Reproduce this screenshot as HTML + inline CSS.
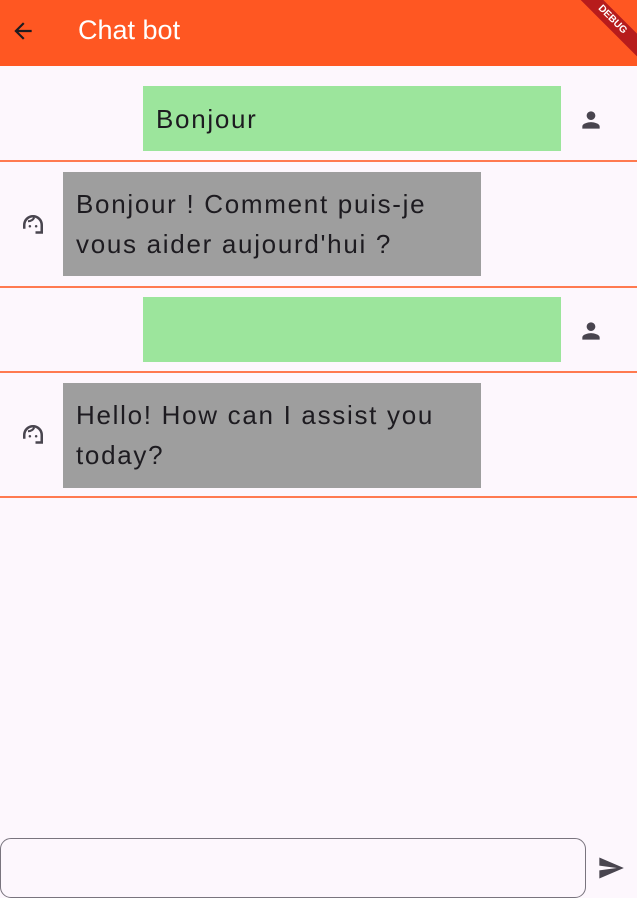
<!DOCTYPE html>
<html><head><meta charset="utf-8"><style>
*{margin:0;padding:0;box-sizing:border-box}
body{width:637px;height:898px;background:#fdf7fd;position:relative;overflow:hidden;font-family:"Liberation Sans",sans-serif;color:#1d1b20}
.bar{position:absolute;left:0;top:0;width:637px;height:66px;background:#ff5722}
.title{position:absolute;left:78px;top:15px;font-size:27px;color:#fff}
.abs{position:absolute}
.g{background:#9ce59c}.r{background:#9e9e9e}
.t{font-size:26px;line-height:40px;padding-left:13px;letter-spacing:1.7px;white-space:nowrap}
.hr{position:absolute;left:0;width:637px;height:2px;background:#ff7a50}
.ribbon{position:absolute;right:-30px;top:12px;width:110px;height:16px;background:#b71c1c;color:#fff;font-size:10px;font-weight:bold;text-align:center;line-height:16px;transform:rotate(45deg)}
</style></head><body>
<div class="bar"></div>
<svg class="abs" style="left:10px;top:18px" width="26" height="26" viewBox="0 0 24 24"><path d="M20 11H7.830l5.59-5.59L12 4l-8 8 8 8 1.41-1.41L7.83 13H20v-2z" fill="#1d1b20"/></svg>
<div class="title">Chat bot</div>
<div class="ribbon">DEBUG</div>

<div class="abs g t" style="left:143px;top:86px;width:418px;height:65px;padding-top:13px">Bonjour</div>
<svg class="abs" style="left:578px;top:107px" width="26" height="26" viewBox="0 0 24 24"><path d="M12 12c2.2 0 4-1.8 4-4s-1.8-4-4-4-4 1.8-4 4 1.8 4 4 4zm0 2c-2.7 0-8 1.3-8 4v2h16v-2c0-2.7-5.3-4-8-4z" fill="#49454f"/></svg>
<div class="hr" style="top:160px"></div>

<div class="abs r t" style="left:63px;top:172px;width:418px;height:104px;padding-top:12px">Bonjour ! Comment puis-je<br>vous aider aujourd'hui ?</div>
<svg class="abs" style="left:18px;top:210px" width="30" height="30" viewBox="0 0 24 24"><path d="M5 14v-2a7 7 0 0 1 14 0v4M5 12v3M19 15v3h-5" fill="none" stroke="#49454f" stroke-width="2"/><path d="M8 9c2 0 4-1 5-3" fill="none" stroke="#49454f" stroke-width="1.6"/><circle cx="9.5" cy="13" r="1" fill="#49454f"/><circle cx="14.5" cy="13" r="1" fill="#49454f"/></svg>
<div class="hr" style="top:286px"></div>

<div class="abs g" style="left:143px;top:297px;width:418px;height:65px"></div>
<svg class="abs" style="left:578px;top:318px" width="26" height="26" viewBox="0 0 24 24"><path d="M12 12c2.2 0 4-1.8 4-4s-1.8-4-4-4-4 1.8-4 4 1.8 4 4 4zm0 2c-2.7 0-8 1.3-8 4v2h16v-2c0-2.7-5.3-4-8-4z" fill="#49454f"/></svg>
<div class="hr" style="top:371px"></div>

<div class="abs r t" style="left:63px;top:383px;width:418px;height:105px;padding-top:12px">Hello! How can I assist you<br>today?</div>
<svg class="abs" style="left:18px;top:420px" width="30" height="30" viewBox="0 0 24 24"><path d="M5 14v-2a7 7 0 0 1 14 0v4M5 12v3M19 15v3h-5" fill="none" stroke="#49454f" stroke-width="2"/><path d="M8 9c2 0 4-1 5-3" fill="none" stroke="#49454f" stroke-width="1.6"/><circle cx="9.5" cy="13" r="1" fill="#49454f"/><circle cx="14.5" cy="13" r="1" fill="#49454f"/></svg>
<div class="hr" style="top:496px"></div>

<div class="abs" style="left:0;top:838px;width:586px;height:60px;border:1.3px solid #79747e;border-radius:11px"></div>
<svg class="abs" style="left:596px;top:854px" width="30" height="28" viewBox="0 0 24 24"><path d="M2.01 21L23 12 2.01 3 2 10l15 2-15 2z" fill="#49454f"/></svg>
</body></html>
